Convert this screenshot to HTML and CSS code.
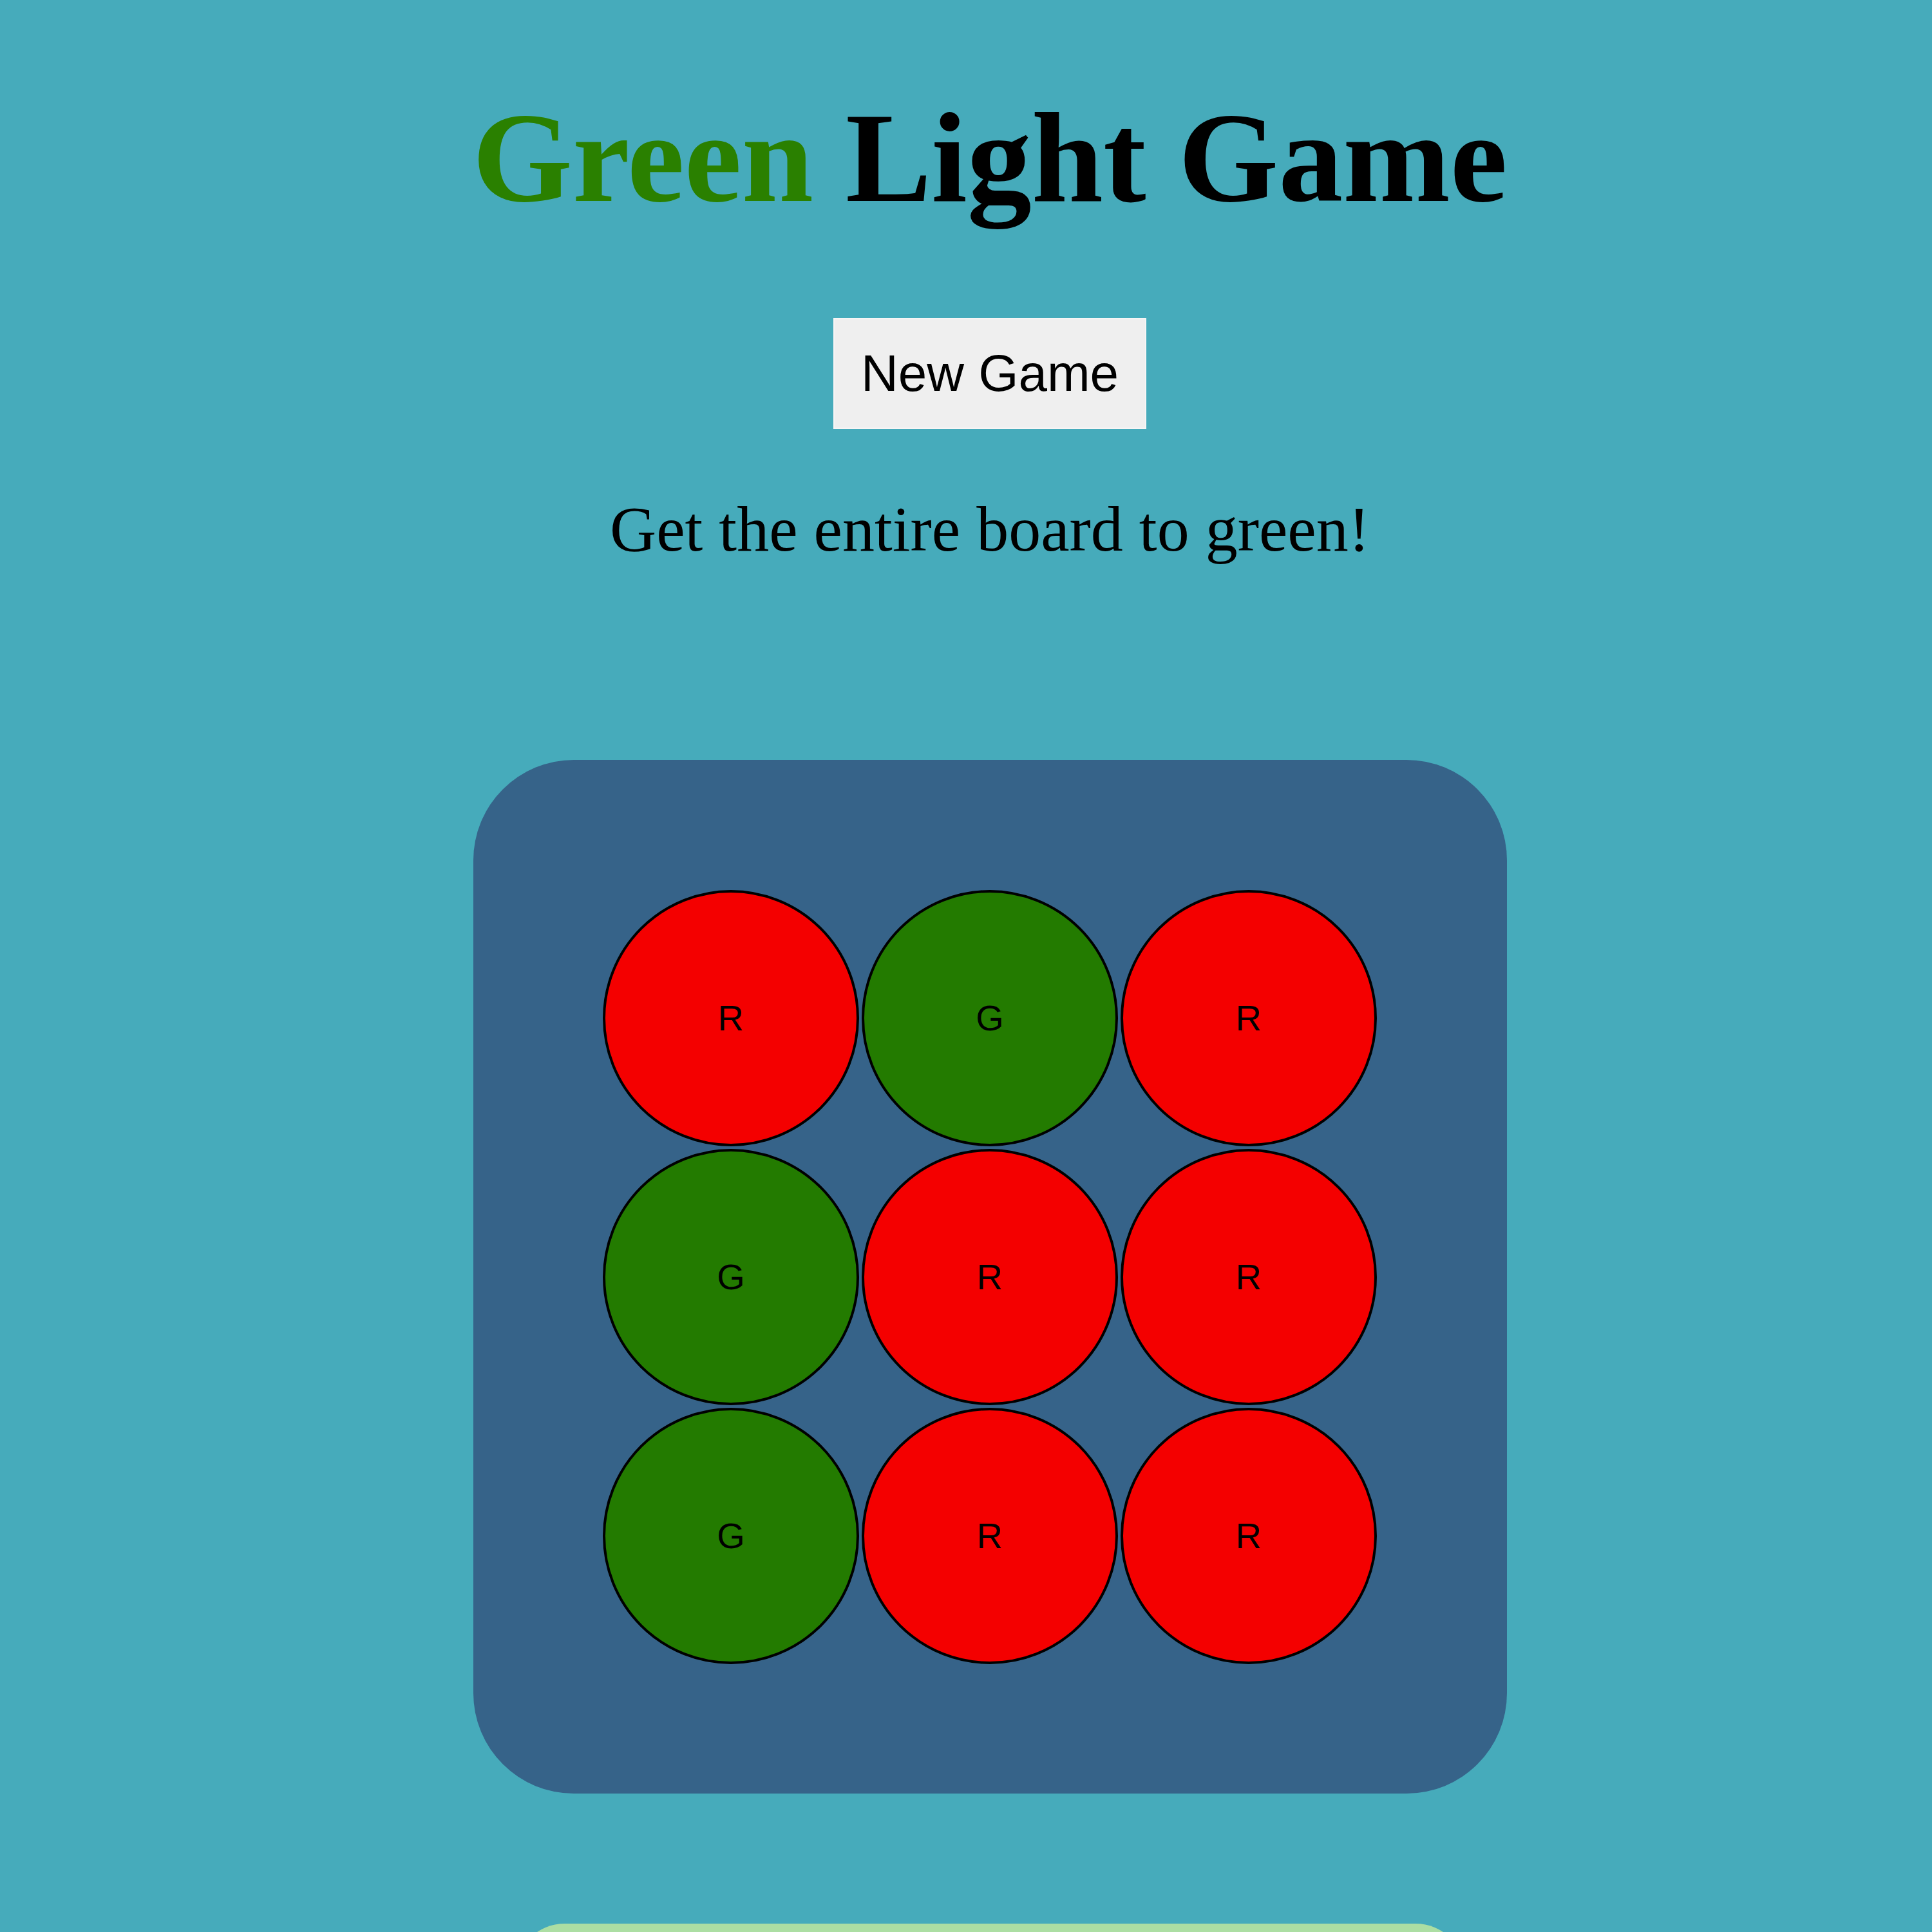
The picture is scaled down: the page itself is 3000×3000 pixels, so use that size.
FILE: index.html
```html
<!DOCTYPE html>
<html lang="en">
<head>
<meta charset="utf-8">
<title>Green Light Game</title>
<link rel="stylesheet" href="styles.css">
</head>
<body>
<main class="page">
  <h1 class="title"><span class="title-green">Green</span> Light Game</h1>
  <button class="new-game" type="button">New Game</button>
  <p class="instructions">Get the entire board to green!</p>
  <div class="board">
    <div class="light red">R</div>
    <div class="light green">G</div>
    <div class="light red">R</div>
    <div class="light green">G</div>
    <div class="light red">R</div>
    <div class="light red">R</div>
    <div class="light green">G</div>
    <div class="light red">R</div>
    <div class="light red">R</div>
  </div>
  <div class="status"></div>
</main>
</body>
</html>
```

FILE: styles.css
```css
html, body {
  margin: 0;
  background: #46abbb;
}

body {
  padding-left: 74px;
  font-family: "Liberation Serif", "Times New Roman", serif;
  color: #000;
  overflow: hidden;
}

.page {
  display: flex;
  flex-direction: column;
  align-items: center;
}

.title {
  margin: 130px 0 0;
  font-size: 200px;
  line-height: 230px;
  font-weight: bold;
  white-space: nowrap;
}

.title-green {
  color: #2a8000;
}

.new-game {
  margin-top: 134px;
  width: 486px;
  height: 172px;
  padding: 0;
  background: #efefef;
  border: 2px solid #f7f5f5;
  font-family: "Liberation Sans", Arial, sans-serif;
  font-size: 80px;
  color: #000;
}

.instructions {
  margin: 98px 0 0;
  font-size: 100px;
  line-height: 115px;
  white-space: nowrap;
}

.board {
  margin-top: 301px;
  box-sizing: border-box;
  width: 1605px;
  height: 1605px;
  border-radius: 156px;
  background: #366389;
  display: grid;
  grid-template-columns: repeat(3, 398px);
  grid-auto-rows: 398px;
  gap: 4px;
  place-content: center;
}

.light {
  box-sizing: border-box;
  border: 4px solid #000;
  border-radius: 50%;
  display: flex;
  align-items: center;
  justify-content: center;
  font-family: "Liberation Sans", Arial, sans-serif;
  font-size: 56px;
  color: #000;
}

.red {
  background: #f40000;
}

.green {
  background: #237b00;
}

.status {
  margin-top: 202px;
  width: 1477px;
  height: 300px;
  border-radius: 78px;
  background: #acdea3;
}
```
